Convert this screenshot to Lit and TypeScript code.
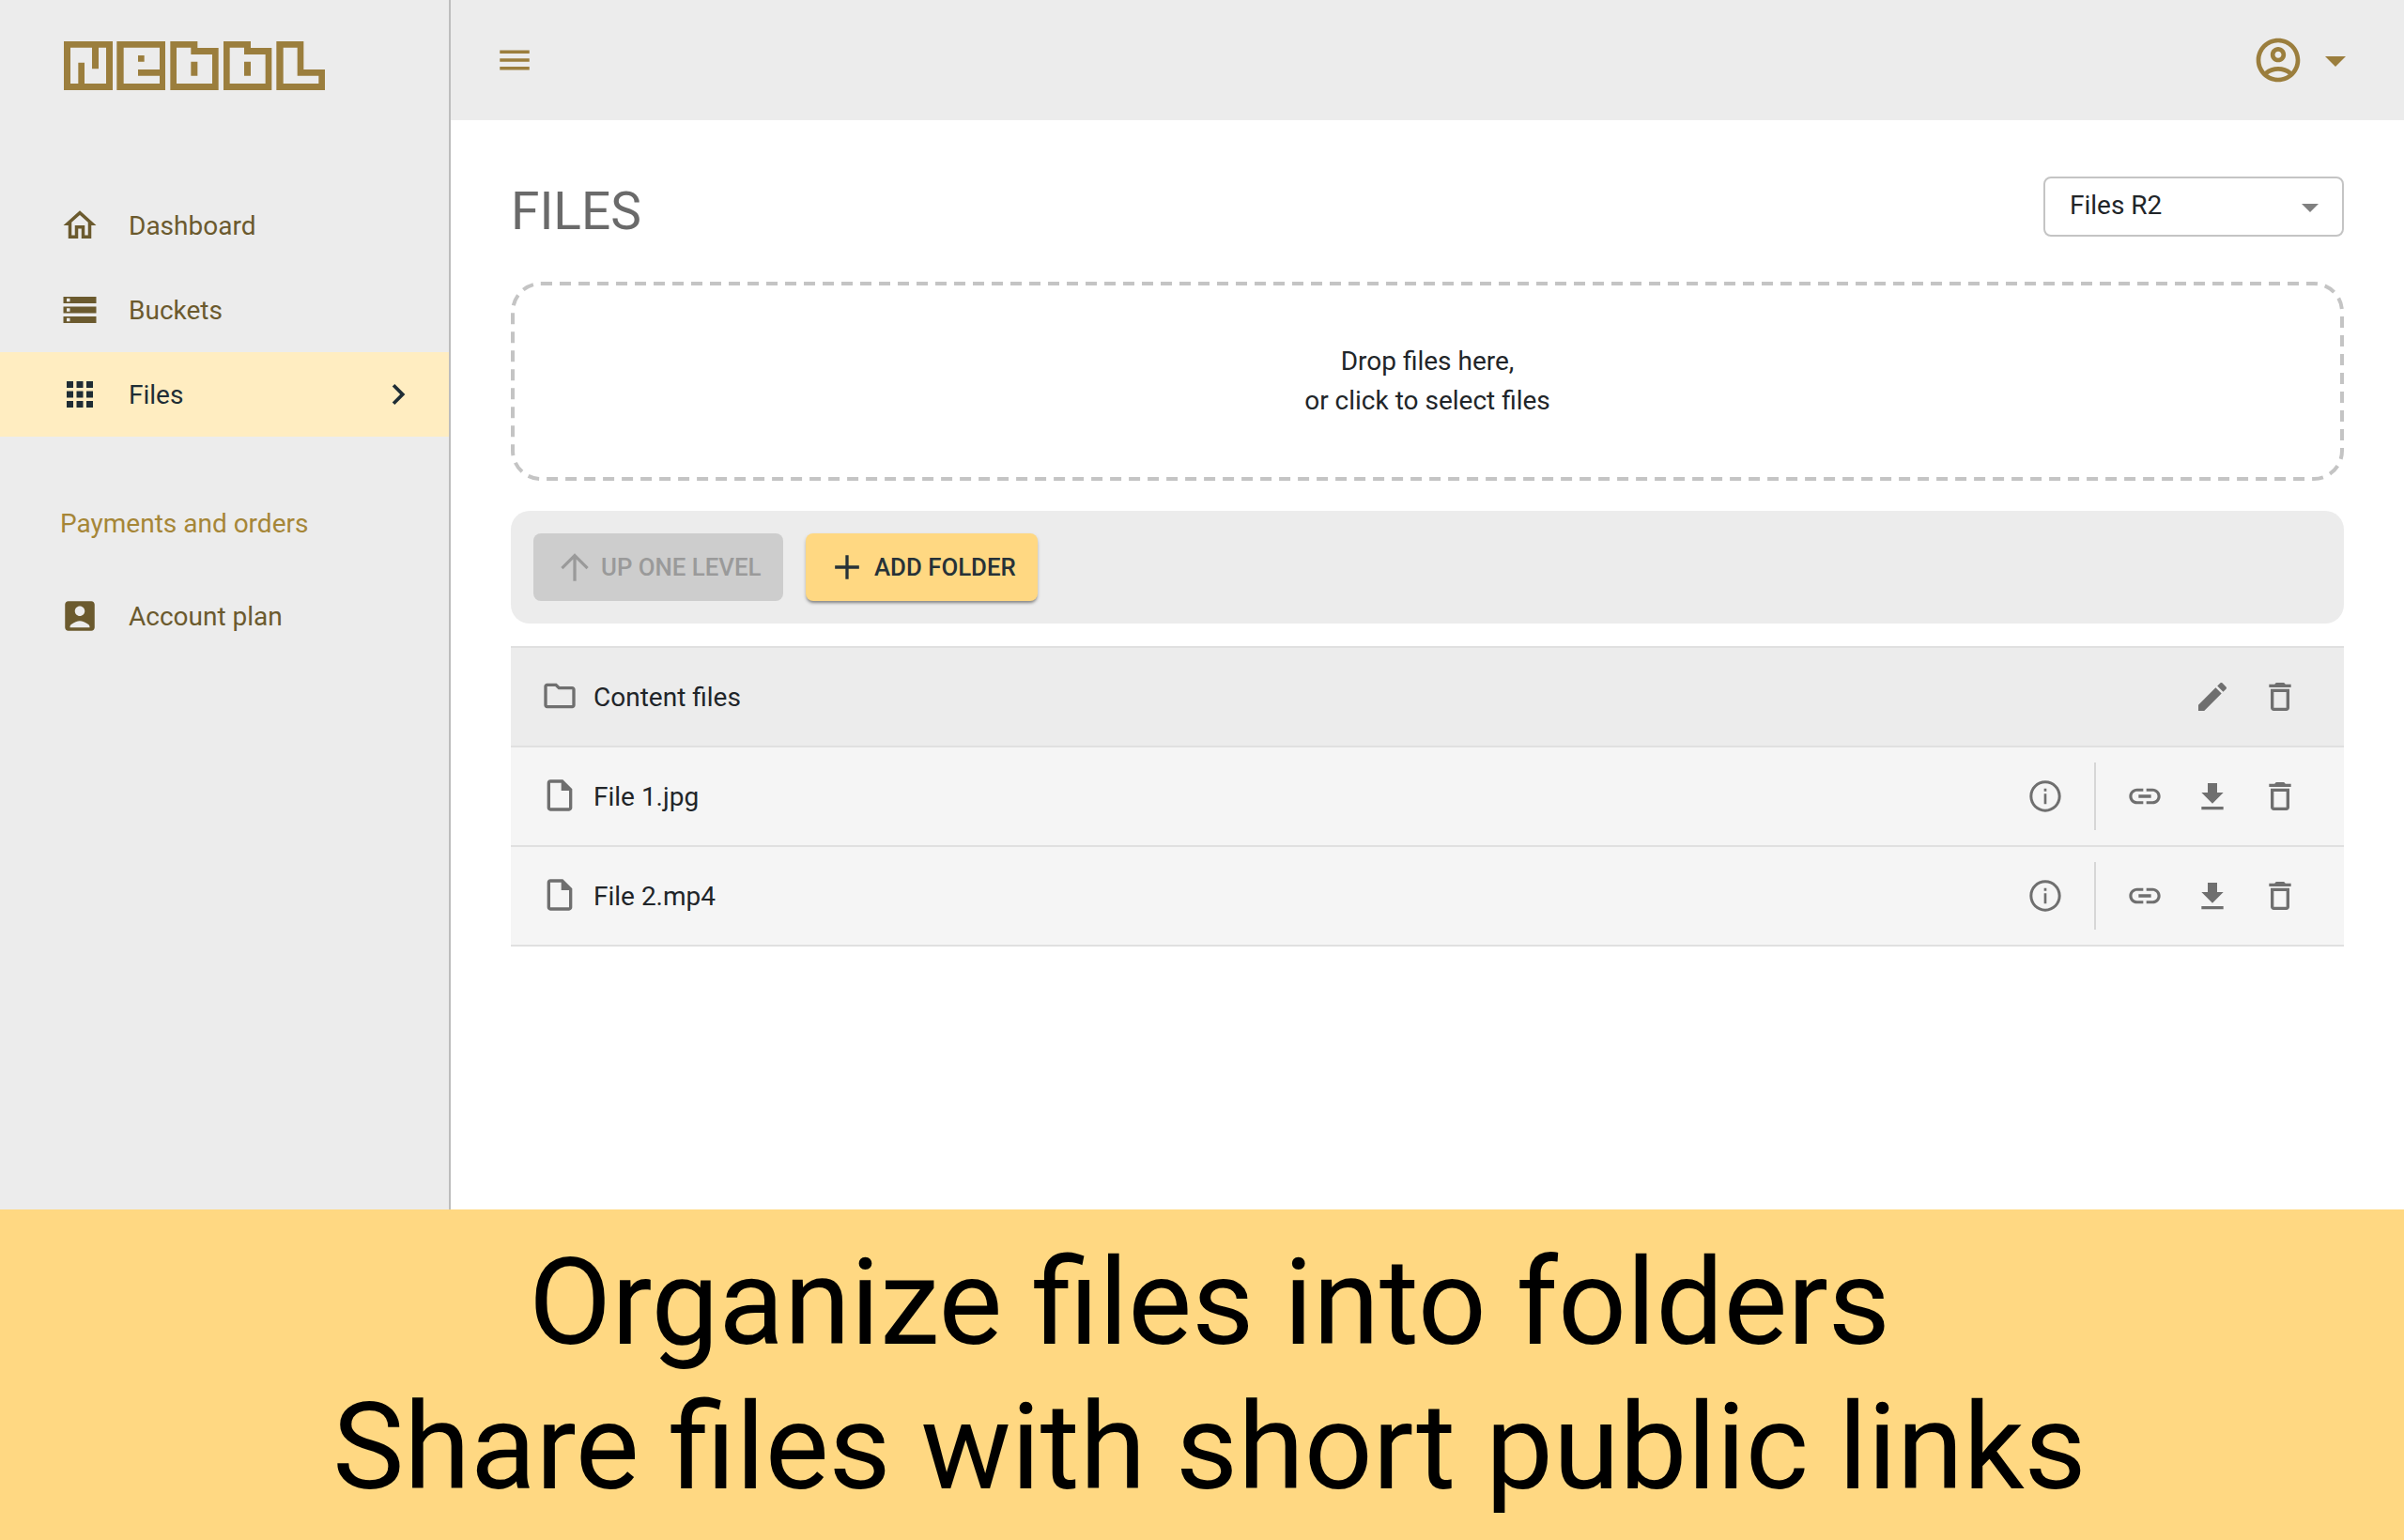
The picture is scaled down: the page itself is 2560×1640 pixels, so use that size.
import { LitElement, html, css, svg } from "lit";
import { customElement } from "lit/decorators.js";

const P: Record<string, string> = {
  home: "M12 5.69l5 4.5V18h-2v-6H9v6H7v-7.81l5-4.5M12 3L2 12h3v8h6v-6h2v6h6v-8h3L12 3z",
  storage: "M2 20h20v-4H2v4zm2-3h2v2H4v-2zM2 4v4h20V4H2zm4 3H4V5h2v2zm-4 7h20v-4H2v4zm2-3h2v2H4v-2z",
  apps: "M4 8h4V4H4v4zm6 12h4v-4h-4v4zm-6 0h4v-4H4v4zm0-6h4v-4H4v4zm6 0h4v-4h-4v4zm6-10v4h4V4h-4zm-6 4h4V4h-4v4zm6 6h4v-4h-4v4zm0 6h4v-4h-4v4z",
  chevron: "M10 6L8.59 7.41 13.17 12l-4.58 4.59L10 18l6-6z",
  accountBox: "M19 3H5c-1.11 0-2 .9-2 2v14c0 1.1.89 2 2 2h14c1.1 0 2-.9 2-2V5c0-1.1-.9-2-2-2zm-7 3c1.66 0 3 1.34 3 3s-1.34 3-3 3-3-1.34-3-3 1.34-3 3-3zm6 13H6v-.23c0-.62.28-1.2.76-1.58C8.47 15.82 10.64 15 12 15s3.53.82 5.24 2.19c.48.38.76.97.76 1.58V19z",
  menu: "M3 18h18v-2H3v2zm0-5h18v-2H3v2zm0-7v2h18V6H3z",
  profile: "M12 2C6.48 2 2 6.48 2 12s4.48 10 10 10 10-4.48 10-10S17.52 2 12 2zM7.35 18.5C8.66 17.56 10.26 17 12 17s3.34.56 4.65 1.5c-1.31.94-2.91 1.5-4.65 1.5s-3.34-.56-4.65-1.5zm10.79-1.38C16.45 15.8 14.32 15 12 15s-4.45.8-6.14 2.12C4.7 15.73 4 13.95 4 12c0-4.42 3.58-8 8-8s8 3.58 8 8c0 1.95-.7 3.73-1.86 5.12zM12 6c-1.93 0-3.5 1.57-3.5 3.5S10.07 13 12 13s3.5-1.57 3.5-3.5S13.93 6 12 6zm0 5c-.83 0-1.5-.67-1.5-1.5S11.17 8 12 8s1.5.67 1.5 1.5S12.83 11 12 11z",
  up: "M4 12l1.2 1.2L11.1 7.4V20h1.8V7.4l5.9 5.8L20 12l-8-8-8 8z",
  add: "M19 12.9h-6.1V19h-1.8v-6.1H5v-1.8h6.1V5h1.8v6.1H19v1.8z",
  folder: "M9.17 6l2 2H20v10H4V6h5.17M10 4H4c-1.1 0-1.99.9-1.99 2L2 18c0 1.1.9 2 2 2h16c1.1 0 2-.9 2-2V8c0-1.1-.9-2-2-2h-8l-2-2z",
  file: "M14 2H6c-1.1 0-2 .9-2 2v16c0 1.1.9 2 2 2h12c1.1 0 2-.9 2-2V8l-6-6zM6 20V4h7v5h5v11H6z",
  edit: "M3 17.25V21h3.75L17.81 9.94l-3.75-3.75L3 17.25zM20.71 7.04c.39-.39.39-1.02 0-1.41l-2.34-2.34c-.39-.39-1.02-.39-1.41 0l-1.83 1.83 3.75 3.75 1.83-1.83z",
  trash: "M16 9v10H8V9h8m-1.5-6h-5l-1 1H5v2h14V4h-3.5l-1-1zM18 7H6v12c0 1.1.9 2 2 2h8c1.1 0 2-.9 2-2V7z",
  info: "M11.2 7h1.6v1.8h-1.6zm0 3.4h1.6V17h-1.6zM12 2C6.48 2 2 6.48 2 12s4.48 10 10 10 10-4.48 10-10S17.52 2 12 2zm0 18.2c-4.52 0-8.2-3.68-8.2-8.2S7.48 3.8 12 3.8s8.2 3.68 8.2 8.2-3.68 8.2-8.2 8.2z",
  link: "M3.9 12c0-1.71 1.39-3.1 3.1-3.1h4V7H7c-2.76 0-5 2.24-5 5s2.24 5 5 5h4v-1.9H7c-1.71 0-3.1-1.39-3.1-3.1zM8 13h8v-2H8v2zm9-6h-4v1.9h4c1.71 0 3.1 1.39 3.1 3.1s-1.39 3.1-3.1 3.1h-4V17h4c2.76 0 5-2.24 5-5s-2.24-5-5-5z",
  download: "M19 9h-4V3H9v6H5l7 7 7-7zM5 18v2h14v-2H5z",
};

const icon = (name: string, cls = "") =>
  html`<svg class="icon ${cls}" viewBox="0 0 24 24" fill="currentColor" aria-hidden="true">${svg`<path d=${P[name]}></path>`}</svg>`;

const LOGO =
  "M54 42H210V198H54ZM75 62V177H100V110H120V177H189V62H165V130H144V62Z" +
  "M223 42H378V198H223ZM245 62V177H360V152H291V132H360V62ZM291 87H311V107H291Z" +
  "M394 42H481V63H548V198H394ZM414 62V177H528V84H460V62ZM460 107H481V152H460Z" +
  "M564 42H651V63H718V198H564ZM584 62V177H698V84H630V62ZM630 107H651V152H630Z" +
  "M733 42H820V132H888V198H733ZM755 62V177H868V152H800V62Z";

@customElement("app-root")
export class AppRoot extends LitElement {
  static styles = css`
    :host {
      display: block;
      width: 2560px;
      height: 1640px;
      font-family: Roboto, "Liberation Sans", sans-serif;
      font-size: 28px;
      color: #212529;
      background: #fff;
      overflow: hidden;
    }
    * { box-sizing: border-box; }
    .icon { display: block; width: 40px; height: 40px; flex: none; }
    .top { display: grid; grid-template-columns: 480px 1fr; height: 1288px; }

    .side { background: #ececec; border-right: 2px solid #bdbdbd; }
    .logo-wrap { height: 195px; padding: 30px 0 0 50px; }
    .logo { display: block; width: 310px; height: 80px; fill: #9b7e3d; }
    .nav { display: flex; align-items: center; height: 90px; color: #6b5a2e; }
    .nav .icon { width: 42px; height: 42px; margin-left: 64px; margin-right: 31px; }
    .nav.active { background: #ffedc1; color: #1f2d35; }
    .nav .chev { margin: 0 32px 0 auto; width: 44px; height: 44px; }
    .section { margin-top: 69px; padding-left: 64px; line-height: 48px; color: #a68637; }
    .section + .nav { margin-top: 29px; }

    .main { display: flex; flex-direction: column; min-width: 0; }
    .header {
      height: 128px; background: #ececec; flex: none;
      display: flex; align-items: center; padding: 0 62px 0 47px;
      color: #9b7e3d;
    }
    .header .menu { width: 42px; height: 42px; }
    .header .profile { width: 56px; height: 56px; margin-left: auto; }
    .caret { width: 0; height: 0; border-left: 11px solid transparent; border-right: 11px solid transparent; border-top: 11px solid #9b7e3d; margin-left: 22px; margin-top: 3px; }

    .content { padding: 60px 64px 0; display: flex; flex-direction: column; }
    .title-row { display: flex; justify-content: space-between; align-items: flex-start; height: 64px; }
    h1 { margin: 5px 0 0; font-size: 55px; font-weight: 400; line-height: 64px; color: #6a6a6a; }
    .select {
      width: 320px; height: 64px; border: 2px solid #c4c4c4; border-radius: 8px;
      display: flex; align-items: center; padding: 0 26px 3px; justify-content: space-between;
    }
    .select i { width: 0; height: 0; border-left: 9px solid transparent; border-right: 9px solid transparent; border-top: 9px solid #808080; margin: 5px -1px 0 0; }
    .drop {
      position: relative; margin-top: 48px; height: 212px;
      display: flex; flex-direction: column; align-items: center; justify-content: center;
      line-height: 42px; text-align: center;
    }
    .dash { position: absolute; inset: 0; width: 100%; height: 100%; fill: none; stroke: #c4c4c4; stroke-width: 4; stroke-dasharray: 12 8; }
    .bar {
      margin-top: 32px; height: 120px; background: #ececec; border-radius: 20px;
      display: flex; align-items: center; gap: 24px; padding: 0 24px;
    }
    .btn {
      height: 72px; border-radius: 8px; display: flex; align-items: center;
      font-size: 25.8px; font-weight: 500;
    }
    .btn .icon { width: 44px; height: 44px; }
    .btn.off { width: 266px; background: #cdcdcd; color: #9a9a9a; padding-left: 22px; gap: 6px; }
    .btn.on {
      width: 247px; background: #ffd882; color: #263238; padding-left: 22px; gap: 7px;
      box-shadow: 0 3px 3px -1px rgba(0,0,0,.35), 0 2px 4px rgba(0,0,0,.14);
    }
    .rows { margin-top: 24px; }
    .row {
      height: 106px; display: flex; align-items: center; background: #f5f5f5;
      border-top: 2px solid #e0e0e0; padding: 0 48px 0 32px; color: #212529;
    }
    .row.folder { background: #ececec; }
    .row:last-child { border-bottom: 2px solid #e0e0e0; height: 108px; }
    .row .lead { color: #6f6f6f; margin: 0 16px 3px 0; }
    .row .name { flex: 1; }
    .acts { display: flex; align-items: center; gap: 32px; color: #6f6f6f; }
    .acts .dl { margin-top: 2px; }
    .sep { width: 2px; height: 72px; background: #d6d6d6; }

    .banner {
      height: 352px; background: #ffd882; color: #000;
      font-size: 128.1px; line-height: 154px; text-align: center;
      padding: 22px 0 0 16px;
    }
  `;

  private fileRow(name: string) {
    return html`<div class="row">
      ${icon("file", "lead")}<span class="name">${name}</span>
      <div class="acts">
        ${icon("info")}<span class="sep"></span>${icon("link")}${icon("download", "dl")}${icon("trash")}
      </div>
    </div>`;
  }

  render() {
    return html`
      <div class="top">
        <aside class="side">
          <div class="logo-wrap">
            <svg class="logo" viewBox="0 0 930 240" fill-rule="evenodd" role="img" aria-label="Nebbl logo"><path d=${LOGO}></path></svg>
          </div>
          <div class="nav">${icon("home")}<span>Dashboard</span></div>
          <div class="nav">${icon("storage")}<span>Buckets</span></div>
          <div class="nav active">${icon("apps")}<span>Files</span>${icon("chevron", "chev")}</div>
          <div class="section">Payments and orders</div>
          <div class="nav">${icon("accountBox")}<span>Account plan</span></div>
        </aside>
        <main class="main">
          <header class="header">
            ${icon("menu", "menu")}${icon("profile", "profile")}<span class="caret"></span>
          </header>
          <section class="content">
            <div class="title-row">
              <h1>FILES</h1>
              <div class="select"><span>Files R2</span><i></i></div>
            </div>
            <div class="drop">
              <svg class="dash" aria-hidden="true"><rect x="2" y="2" width="1948" height="208" rx="30" ry="30"></rect></svg>
              <div>Drop files here,</div><div>or click to select files</div>
            </div>
            <div class="bar">
              <div class="btn off">${icon("up")}<span>UP ONE LEVEL</span></div>
              <div class="btn on">${icon("add")}<span>ADD FOLDER</span></div>
            </div>
            <div class="rows">
              <div class="row folder">
                ${icon("folder", "lead")}<span class="name">Content files</span>
                <div class="acts">${icon("edit")}${icon("trash")}</div>
              </div>
              ${this.fileRow("File 1.jpg")}
              ${this.fileRow("File 2.mp4")}
            </div>
          </section>
        </main>
      </div>
      <div class="banner">
        <div>Organize files into folders</div>
        <div>Share files with short public links</div>
      </div>
    `;
  }
}
